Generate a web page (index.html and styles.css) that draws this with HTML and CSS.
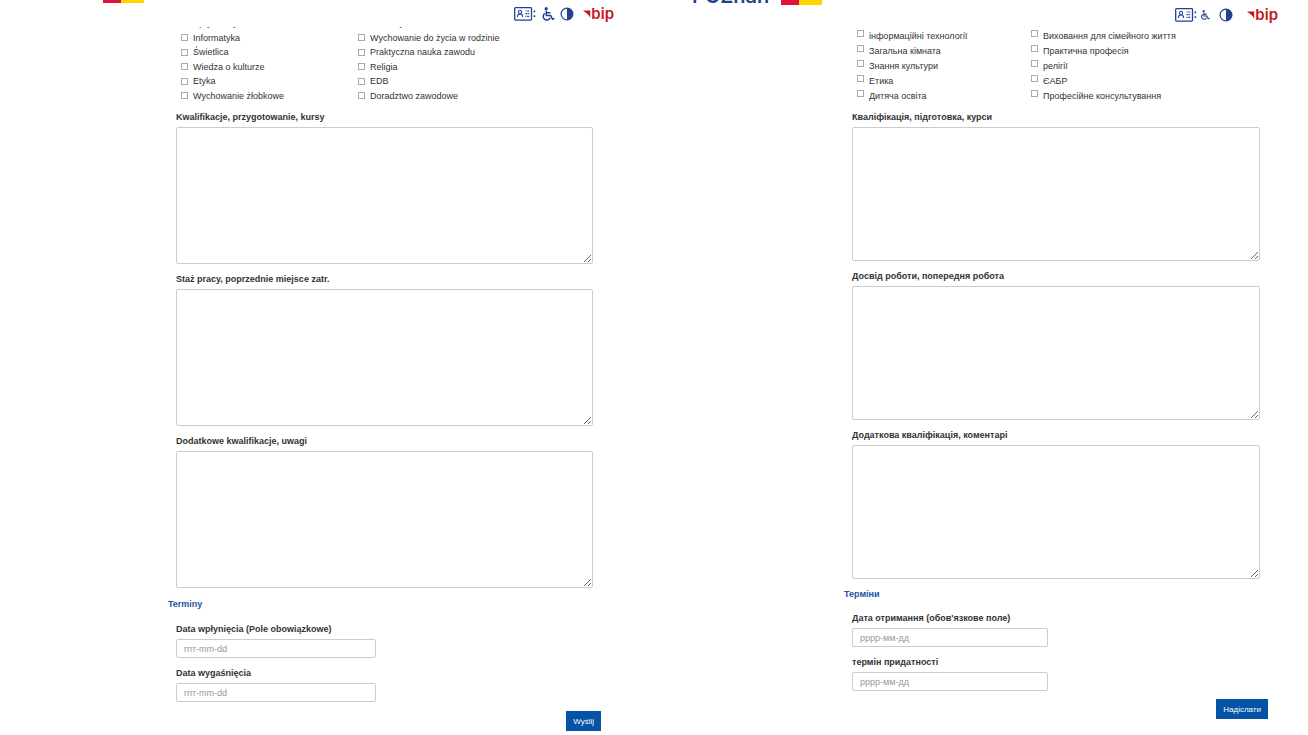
FILE: index.html
```html
<!DOCTYPE html>
<html lang="pl">
<head>
  <meta charset="UTF-8">
  <meta name="viewport" content="width=device-width, initial-scale=1.0">
  <title>Formularz</title>
  <link rel="stylesheet" href="styles.css">
</head>
<body>
  <svg class="sprite" width="0" height="0" aria-hidden="true">
    <symbol id="i-card" viewBox="0 0 22 14">
      <rect x="0.7" y="0.7" width="16.8" height="12.4" rx="0.8" fill="none" stroke="currentColor" stroke-width="1.3"/>
      <circle cx="6" cy="4.9" r="1.6" fill="none" stroke="currentColor" stroke-width="1.1"/>
      <path d="M3.5 10V9q0.2-2 2.5-2t2.5 2v1" fill="none" stroke="currentColor" stroke-width="1.1"/>
      <path d="M11.5 4h1M13.2 4h2M11.5 6.7h2M14.2 6.7h1M11.5 9.4h1M13.2 9.4h2" fill="none" stroke="currentColor" stroke-width="1.2"/>
      <path d="M19.6 3.4h1.6v1.8h-1.6zM19.6 8.2h1.6V10h-1.6z" fill="currentColor"/>
    </symbol>
    <symbol id="i-chair" viewBox="0 0 14 14">
      <circle cx="5.2" cy="1.7" r="1.6" fill="currentColor"/>
      <path d="M5.3 3.4v5h4.4l1.8 3.8 1.9-0.8M5.5 5.8h4" fill="none" stroke="currentColor" stroke-width="1.5"/>
      <path d="M3.8 6.4a3.6 3.6 0 1 0 5.3 4.4" fill="none" stroke="currentColor" stroke-width="1.5"/>
    </symbol>
    <symbol id="i-contrast" viewBox="0 0 14 14">
      <circle cx="7" cy="7" r="5.9" fill="none" stroke="currentColor" stroke-width="1.2"/>
      <path d="M7 1a6 6 0 0 1 0 12z" fill="currentColor"/>
    </symbol>
    <symbol id="i-flag" viewBox="0 0 8 8">
      <path d="M0 0.5h7.2V7.6L4.8 4.2z" fill="currentColor"/>
    </symbol>
  </svg>

  <main class="forms">
    <section class="panel panel-pl">
      <header class="top">
        <div class="logo"><span class="logo-red"></span><span class="logo-yellow"></span></div>
        <nav class="tools">
          <a href="#" class="card" aria-label="Informacje"><svg><use href="#i-card"/></svg></a>
          <a href="#" class="chair" aria-label="Dostępność"><svg><use href="#i-chair"/></svg></a>
          <a href="#" class="contrast" aria-label="Kontrast"><svg><use href="#i-contrast"/></svg></a>
          <a href="#" class="bip"><svg><use href="#i-flag"/></svg>bip</a>
        </nav>
      </header>
      <form>
        <div class="subjects">
          <div class="checks">
            <label><input type="checkbox">Język obcy</label>
            <label><input type="checkbox">Edukacja</label>
            <label><input type="checkbox">Informatyka</label>
            <label><input type="checkbox">Wychowanie do życia w rodzinie</label>
            <label><input type="checkbox">Świetlica</label>
            <label><input type="checkbox">Praktyczna nauka zawodu</label>
            <label><input type="checkbox">Wiedza o kulturze</label>
            <label><input type="checkbox">Religia</label>
            <label><input type="checkbox">Etyka</label>
            <label><input type="checkbox">EDB</label>
            <label><input type="checkbox">Wychowanie żłobkowe</label>
            <label><input type="checkbox">Doradztwo zawodowe</label>
          </div>
        </div>
        <div class="field">
          <label for="pl-kwal">Kwalifikacje, przygotowanie, kursy</label>
          <textarea id="pl-kwal"></textarea>
        </div>
        <div class="field">
          <label for="pl-staz">Staż pracy, poprzednie miejsce zatr.</label>
          <textarea id="pl-staz"></textarea>
        </div>
        <div class="field">
          <label for="pl-uwagi">Dodatkowe kwalifikacje, uwagi</label>
          <textarea id="pl-uwagi"></textarea>
        </div>
        <h2>Terminy</h2>
        <div class="date">
          <label for="pl-od">Data wpłynięcia (Pole obowiązkowe)</label>
          <input type="text" id="pl-od" placeholder="rrrr-mm-dd">
        </div>
        <div class="date">
          <label for="pl-do">Data wygaśnięcia</label>
          <input type="text" id="pl-do" placeholder="rrrr-mm-dd">
        </div>
        <button type="submit">Wyślij</button>
      </form>
    </section>

    <section class="panel panel-uk" lang="uk">
      <header class="top">
        <div class="logo"><span class="logo-name">POZnań</span><span class="logo-red"></span><span class="logo-yellow"></span></div>
        <nav class="tools">
          <a href="#" class="card" aria-label="Інформація"><svg><use href="#i-card"/></svg></a>
          <a href="#" class="chair" aria-label="Доступність"><svg><use href="#i-chair"/></svg></a>
          <a href="#" class="contrast" aria-label="Контраст"><svg><use href="#i-contrast"/></svg></a>
          <a href="#" class="bip"><svg><use href="#i-flag"/></svg>bip</a>
        </nav>
      </header>
      <form>
        <div class="subjects">
          <div class="checks">
            <label><input type="checkbox">інформаційні технології</label>
            <label><input type="checkbox">Виховання для сімейного життя</label>
            <label><input type="checkbox">Загальна кімната</label>
            <label><input type="checkbox">Практична професія</label>
            <label><input type="checkbox">Знання культури</label>
            <label><input type="checkbox">релігії</label>
            <label><input type="checkbox">Етика</label>
            <label><input type="checkbox">ЄАБР</label>
            <label><input type="checkbox">Дитяча освіта</label>
            <label><input type="checkbox">Професійне консультування</label>
          </div>
        </div>
        <div class="field">
          <label for="uk-kwal">Кваліфікація, підготовка, курси</label>
          <textarea id="uk-kwal"></textarea>
        </div>
        <div class="field">
          <label for="uk-staz">Досвід роботи, попередня робота</label>
          <textarea id="uk-staz"></textarea>
        </div>
        <div class="field">
          <label for="uk-uwagi">Додаткова кваліфікація, коментарі</label>
          <textarea id="uk-uwagi"></textarea>
        </div>
        <h2>Терміни</h2>
        <div class="date">
          <label for="uk-od">Дата отримання (обов'язкове поле)</label>
          <input type="text" id="uk-od" placeholder="рррр-мм-дд">
        </div>
        <div class="date">
          <label for="uk-do">термін придатності</label>
          <input type="text" id="uk-do" placeholder="рррр-мм-дд">
        </div>
        <button type="submit">Надіслати</button>
      </form>
    </section>
  </main>
</body>
</html>
```
FILE: styles.css
```css
* {
  box-sizing: border-box;
}
body {
  margin: 0;
  background: #fff;
  color: #333;
  font-family: "Liberation Sans", Arial, sans-serif;
  font-size: 9px;
}
.sprite {
  display: block;
}
.forms {
  display: grid;
  grid-template-columns: 1fr 1fr;
}

/* header */
.top {
  display: flex;
  justify-content: space-between;
  align-items: flex-start;
  height: 27px;
}
.logo {
  display: flex;
  align-items: flex-end;
  height: 5px;
  overflow: hidden;
}
.logo-name {
  width: 89px;
  color: #24408f;
  font-family: Inter, sans-serif;
  font-size: 20px;
  font-weight: 600;
  line-height: 18px;
}
.logo-red {
  width: 18px;
  height: 16px;
  background: #e2123f;
}
.logo-yellow {
  width: 23px;
  height: 16px;
  background: #ffd500;
}
.tools {
  display: flex;
  align-items: center;
  height: 27px;
  color: #24408f;
}
.tools a {
  display: flex;
  align-items: center;
  color: inherit;
  text-decoration: none;
}
.card svg {
  width: 22px;
  height: 14px;
}
.chair svg,
.contrast svg {
  width: 14px;
  height: 14px;
}
.tools .bip {
  color: #c4161c;
  font-family: Inter, sans-serif;
  font-size: 15px;
  font-weight: 600;
  line-height: 20px;
}
.bip svg {
  width: 8px;
  height: 8px;
}

/* subjects */
.subjects {
  display: flex;
  flex-direction: column;
  justify-content: flex-end;
  overflow: hidden;
  margin-bottom: 4px;
  padding-left: 5px;
}
.checks {
  display: grid;
  grid-auto-rows: 1fr;
  flex-shrink: 0;
}
.checks label {
  display: flex;
  align-items: center;
  gap: 5px;
}
.checks input {
  appearance: none;
  width: 7px;
  height: 7px;
  margin: 0;
  border: 1px solid #aaa;
}

/* fields */
.field {
  margin-bottom: 5px;
}
.field label,
.date label {
  display: block;
  font-weight: bold;
}
.field label {
  line-height: 20px;
}
textarea,
.date input {
  display: block;
  border: 1px solid #ccc;
  border-radius: 2px;
  background: #fff;
  font: inherit;
}
textarea {
  width: 100%;
}
h2 {
  margin: 10px 0 9px -8px;
  color: #1a55a5;
  font-size: 9px;
  line-height: 12px;
}
.date input {
  height: 19px;
  padding: 0 7px;
}
.date input::placeholder {
  color: #999;
}
button {
  display: block;
  margin: 8px -8px 0 auto;
  height: 20px;
  padding: 0 7px;
  border: 0;
  background: #0453a6;
  color: #fff;
  font: 8px "Liberation Sans", Arial, sans-serif;
}

/* polish form */
.panel-pl .logo {
  height: 3px;
  padding-left: 103px;
}
.panel-pl .tools {
  gap: 5px;
  padding-right: 40px;
}
.panel-pl .bip {
  margin-left: 4px;
}
.panel-pl form {
  padding: 0 61px 0 176px;
}
.panel-pl .subjects {
  height: 76px;
}
.panel-pl .checks {
  grid-template-columns: 177px 1fr;
  height: 87px;
}
.panel-pl textarea {
  height: 137px;
}
.panel-pl .date {
  margin-bottom: 5px;
}
.panel-pl .date label {
  line-height: 20px;
}
.panel-pl .date input {
  width: 200px;
}
.panel-pl button {
  margin-top: 9px;
}

/* ukrainian form */
.panel-uk .logo {
  padding-left: 38px;
}
.panel-uk .top {
  height: 28px;
}
.panel-uk .tools {
  height: 30px;
  padding-right: 30px;
}
.panel-uk .card {
  margin-right: 3px;
}
.panel-uk .chair svg {
  width: 10px;
  height: 10px;
}
.panel-uk .contrast {
  margin: 0 14px 0 9px;
}
.panel-uk form {
  padding: 0 48px 0 198px;
}
.panel-uk .checks {
  grid-template-columns: 174px 1fr;
  height: 75px;
}
.panel-uk .checks input {
  margin-bottom: 5px;
}
.panel-uk textarea {
  height: 134px;
}
.panel-uk h2 {
  margin-top: 9px;
}
.panel-uk .date {
  margin-bottom: 6px;
}
.panel-uk .date label {
  line-height: 19px;
}
.panel-uk .date input {
  width: 196px;
}
```
